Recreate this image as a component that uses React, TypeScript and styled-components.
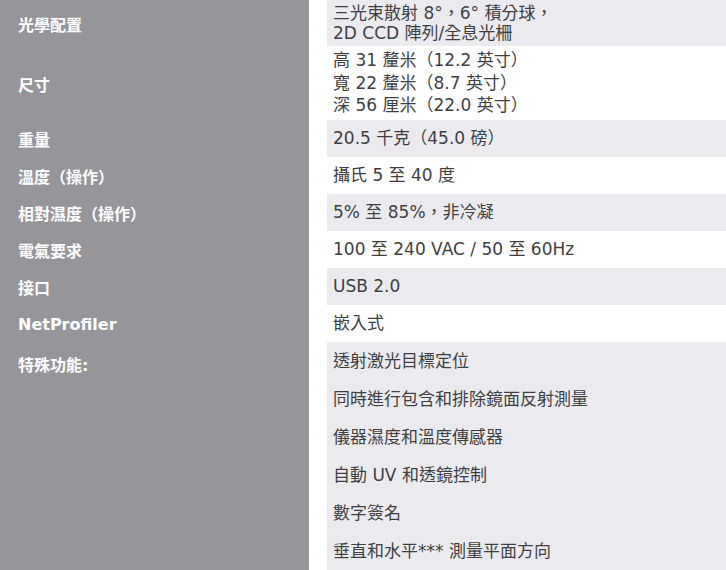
import React from 'react';
import styled, { createGlobalStyle } from 'styled-components';

const GlobalStyle = createGlobalStyle`
  html, body {
    margin: 0;
    padding: 0;
    background: #ffffff;
    overflow: hidden;
  }
  * {
    box-sizing: border-box;
  }
`;

const SpecTable = styled.div`
  display: grid;
  grid-template-columns: 309px 1fr;
  column-gap: 18px;
  width: 726px;
  font-family: "DejaVu Sans", "Noto Sans CJK TC", sans-serif;
`;

const Label = styled.div<{ $top?: boolean }>`
  background: #96969a;
  color: #ffffff;
  font-size: 16px;
  font-weight: 700;
  padding: ${p => (p.$top ? '10px 0 0 18px' : '2px 0 0 18px')};
  display: flex;
  align-items: ${p => (p.$top ? 'flex-start' : 'center')};
`;

const Value = styled.div<{ $shaded: boolean; $lh?: number }>`
  background: ${p => (p.$shaded ? '#ebebef' : '#ffffff')};
  color: #3f3f42;
  font-size: 17px;
  line-height: ${p => p.$lh ?? 22}px;
  padding: 3px 0 3px 6px;
  min-height: 37px;
  display: flex;
  flex-direction: column;
  justify-content: center;
`;

const Line = styled.div``;

const FeatureList = styled.div`
  background: #ebebef;
  color: #3f3f42;
  font-size: 17px;
  display: flex;
  flex-direction: column;
`;

const Feature = styled.div`
  height: 38px;
  line-height: 38px;
  padding-left: 6px;
`;

const specs: { label: string; lines: string[]; lh?: number }[] = [
  { label: '光學配置', lines: ['三光束散射 8°，6° 積分球，', '2D CCD 陣列/全息光柵'], lh: 20 },
  { label: '尺寸', lines: ['高 31 釐米（12.2 英寸）', '寬 22 釐米（8.7 英寸）', '深 56 厘米（22.0 英寸）'], lh: 22.5 },
  { label: '重量', lines: ['20.5 千克（45.0 磅）'] },
  { label: '溫度（操作）', lines: ['攝氏 5 至 40 度'] },
  { label: '相對濕度（操作）', lines: ['5% 至 85%，非冷凝'] },
  { label: '電氣要求', lines: ['100 至 240 VAC / 50 至 60Hz'] },
  { label: '接口', lines: ['USB 2.0'] },
  { label: 'NetProfiler', lines: ['嵌入式'] },
];

const features = [
  '透射激光目標定位',
  '同時進行包含和排除鏡面反射測量',
  '儀器濕度和溫度傳感器',
  '自動 UV 和透鏡控制',
  '數字簽名',
  '垂直和水平*** 測量平面方向',
];

const App: React.FC = () => {
  return (
    <>
      <GlobalStyle />
      <SpecTable>
        {specs.map((s, i) => (
          <React.Fragment key={s.label}>
            <Label>{s.label}</Label>
            <Value $shaded={i % 2 === 0} $lh={s.lh}>
              {s.lines.map(l => (
                <Line key={l}>{l}</Line>
              ))}
            </Value>
          </React.Fragment>
        ))}
        <Label $top>特殊功能:</Label>
        <FeatureList>
          {features.map(f => (
            <Feature key={f}>{f}</Feature>
          ))}
        </FeatureList>
      </SpecTable>
    </>
  );
};

export default App;
